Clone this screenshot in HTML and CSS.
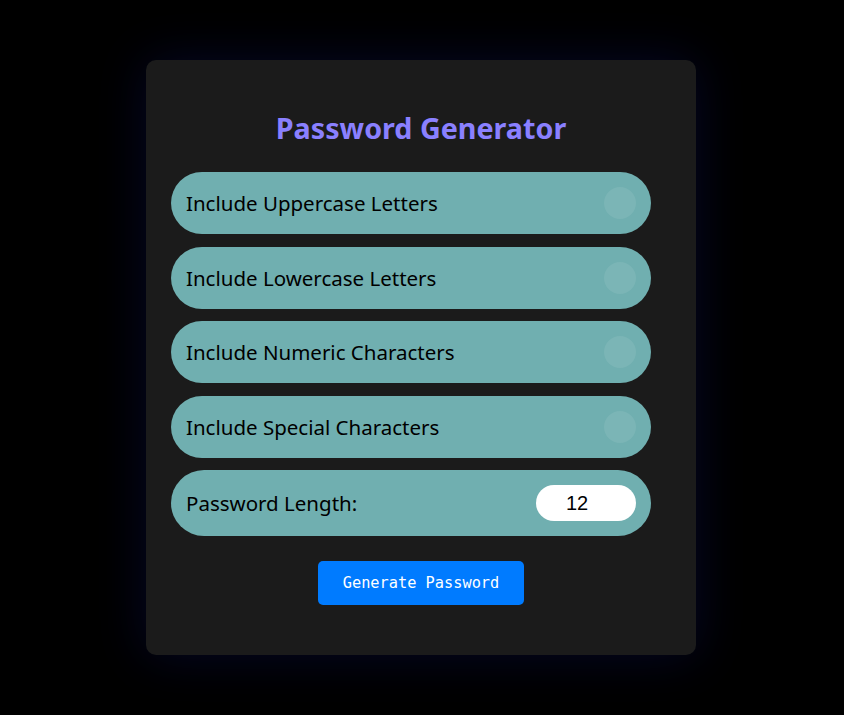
FILE: index.html
```html
<!DOCTYPE html>
<html>
<head>
<meta charset="utf-8">
<link rel="stylesheet" href="styles.css">
</head>
<body>
<div class="card">
  <h1 class="title">Password Generator</h1>
  <div class="rows">
    <label class="row"><span>Include Uppercase Letters</span><span class="knob"></span></label>
    <label class="row"><span>Include Lowercase Letters</span><span class="knob"></span></label>
    <label class="row"><span>Include Numeric Characters</span><span class="knob"></span></label>
    <label class="row"><span>Include Special Characters</span><span class="knob"></span></label>
    <label class="row row-len"><span>Password Length:</span><span class="num">12</span></label>
  </div>
  <button class="gen">Generate Password</button>
</div>
</body>
</html>
```
FILE: styles.css
```css
html, body { margin: 0; padding: 0; }
body {
  background: #000;
  width: 844px;
  height: 715px;
  overflow: hidden;
  padding-top: 60px;
  box-sizing: border-box;
  font-family: "Comic Sans MS", "Noto Sans", sans-serif;
}
.card {
  margin-left: 146px;
  width: 550px;
  height: 595px;
  box-sizing: border-box;
  background: #1b1b1b;
  border-radius: 10px;
  box-shadow: 0 0 50px rgba(15, 20, 110, 0.35);
  padding: 50px 45px 0 25px;
  display: flex;
  flex-direction: column;
  align-items: stretch;
}
.title {
  margin: 0;
  text-align: center;
  color: #8a80ff;
  font-size: 28.7px;
  font-weight: bold;
  line-height: 36px;
  padding-left: 20px;
}
.rows {
  margin-top: 26px;
  display: flex;
  flex-direction: column;
  gap: 12.5px;
}
.row {
  height: 62px;
  background: #70afb0;
  border-radius: 31px;
  display: flex;
  align-items: center;
  justify-content: space-between;
  padding: 0 15px;
  font-size: 20.5px;
  color: #000;
}
.knob {
  width: 32px;
  height: 32px;
  border-radius: 50%;
  background: rgba(255, 255, 255, 0.08);
}
.row-len { height: 66px; border-radius: 33px; }
.num {
  width: 100px;
  height: 36px;
  box-sizing: border-box;
  padding-right: 18px;
  border-radius: 18px;
  background: #fff;
  font-family: "Liberation Sans", Arial, sans-serif;
  font-size: 20px;
  line-height: 36px;
  text-align: center;
  color: #000;
}
.gen {
  align-self: center;
  margin-top: 25px;
  margin-left: 20px;
  width: 206px;
  height: 44px;
  border: none;
  border-radius: 5px;
  background: #007bff;
  color: #fff;
  font-family: "DejaVu Sans Mono", monospace;
  font-size: 15.3px;
}
```
